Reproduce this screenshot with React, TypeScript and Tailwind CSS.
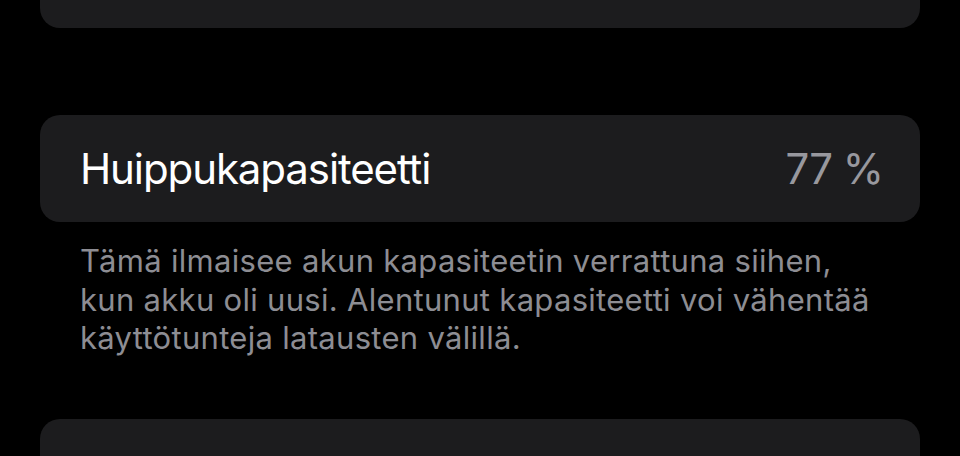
export default function App() {
  return (
    <div className="flex h-[456px] w-[960px] flex-col overflow-hidden bg-black px-10 font-['Inter',sans-serif]">
      <div className="h-[28px] shrink-0 rounded-b-[20px] bg-[#1c1c1e]" />
      <div className="mt-[87px] flex h-[107px] shrink-0 items-center justify-between rounded-[20px] bg-[#1c1c1e] pl-10 pr-[37px]">
        <span className="text-[42px] leading-none tracking-[-1.1px] text-white">Huippukapasiteetti</span>
        <span className="text-[42px] leading-none tracking-[-1px] text-[#98989e]">77 %</span>
      </div>
      <p className="mt-[20px] px-10 text-[31px] leading-[38.5px] tracking-[0.3px] text-[#8d8d93]">
        Tämä ilmaisee akun kapasiteetin verrattuna siihen,
        <br />
        kun akku oli uusi. Alentunut kapasiteetti voi vähentää
        <br />
        käyttötunteja latausten välillä.
      </p>
      <div className="mt-auto h-[37px] shrink-0 rounded-t-[20px] bg-[#1c1c1e]" />
    </div>
  );
}
